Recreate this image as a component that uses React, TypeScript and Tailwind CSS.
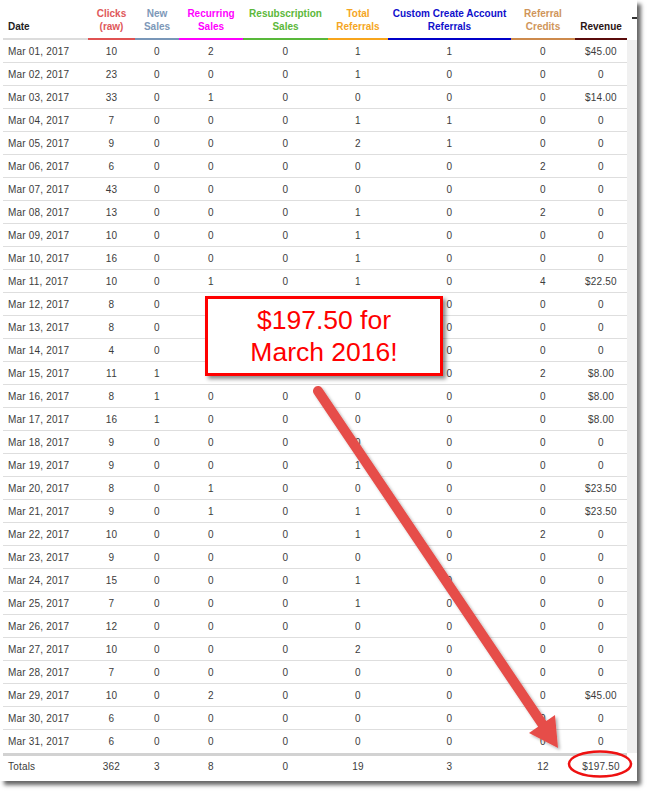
import React from 'react';

type Row = [string, number, number, number | '', number | '', number | '', number, number, string];

const rows: Row[] = [
  ['Mar 01, 2017', 10, 0, 2, 0, 1, 1, 0, '$45.00'],
  ['Mar 02, 2017', 23, 0, 0, 0, 1, 0, 0, '0'],
  ['Mar 03, 2017', 33, 0, 1, 0, 0, 0, 0, '$14.00'],
  ['Mar 04, 2017', 7, 0, 0, 0, 1, 1, 0, '0'],
  ['Mar 05, 2017', 9, 0, 0, 0, 2, 1, 0, '0'],
  ['Mar 06, 2017', 6, 0, 0, 0, 0, 0, 2, '0'],
  ['Mar 07, 2017', 43, 0, 0, 0, 0, 0, 0, '0'],
  ['Mar 08, 2017', 13, 0, 0, 0, 1, 0, 2, '0'],
  ['Mar 09, 2017', 10, 0, 0, 0, 1, 0, 0, '0'],
  ['Mar 10, 2017', 16, 0, 0, 0, 1, 0, 0, '0'],
  ['Mar 11, 2017', 10, 0, 1, 0, 1, 0, 4, '$22.50'],
  // the callout covers these cells in the screenshot
  ['Mar 12, 2017', 8, 0, '', '', '', 0, 0, '0'],
  ['Mar 13, 2017', 8, 0, '', '', '', 0, 0, '0'],
  ['Mar 14, 2017', 4, 0, '', '', '', 0, 0, '0'],
  ['Mar 15, 2017', 11, 1, '', '', '', 0, 2, '$8.00'],
  ['Mar 16, 2017', 8, 1, 0, 0, 0, 0, 0, '$8.00'],
  ['Mar 17, 2017', 16, 1, 0, 0, 0, 0, 0, '$8.00'],
  ['Mar 18, 2017', 9, 0, 0, 0, 0, 0, 0, '0'],
  ['Mar 19, 2017', 9, 0, 0, 0, 1, 0, 0, '0'],
  ['Mar 20, 2017', 8, 0, 1, 0, 0, 0, 0, '$23.50'],
  ['Mar 21, 2017', 9, 0, 1, 0, 1, 0, 0, '$23.50'],
  ['Mar 22, 2017', 10, 0, 0, 0, 1, 0, 2, '0'],
  ['Mar 23, 2017', 9, 0, 0, 0, 0, 0, 0, '0'],
  ['Mar 24, 2017', 15, 0, 0, 0, 1, 0, 0, '0'],
  ['Mar 25, 2017', 7, 0, 0, 0, 1, 0, 0, '0'],
  ['Mar 26, 2017', 12, 0, 0, 0, 0, 0, 0, '0'],
  ['Mar 27, 2017', 10, 0, 0, 0, 2, 0, 0, '0'],
  ['Mar 28, 2017', 7, 0, 0, 0, 0, 0, 0, '0'],
  ['Mar 29, 2017', 10, 0, 2, 0, 0, 0, 0, '$45.00'],
  ['Mar 30, 2017', 6, 0, 0, 0, 0, 0, 0, '0'],
  ['Mar 31, 2017', 6, 0, 0, 0, 0, 0, 0, '0'],
];

const totals = ['Totals', 362, 3, 8, 0, 19, 3, 12, '$197.50'];

// header cells: label lines, text colour, underline colour
const headers = [
  { lines: ['Date'], cls: 'text-[#222] border-[#dcdcdc] text-left pl-[5px]' },
  { lines: ['Clicks', '(raw)'], cls: 'text-[#e0585a] border-[#e05252]' },
  { lines: ['New', 'Sales'], cls: 'text-[#7d98b8] border-[#7896b8]' },
  { lines: ['Recurring', 'Sales'], cls: 'text-[#f0f] border-[#f0f]' },
  { lines: ['Resubscription', 'Sales'], cls: 'text-[#5cb83a] border-[#58b83a]' },
  { lines: ['Total', 'Referrals'], cls: 'text-[#f5a623] border-[#f7a51c]' },
  { lines: ['Custom Create Account', 'Referrals'], cls: 'text-[#1010cc] border-[#0000c8]' },
  { lines: ['Referral', 'Credits'], cls: 'text-[#d0955a] border-[#cd8a4c]' },
  { lines: ['Revenue'], cls: 'text-[#2b1414] border-[#5a0c0c]' },
];

const cols = 'grid grid-cols-[85px_47px_44px_64px_85px_60px_123px_64px_52px]';

const Cells = ({ cells }: { cells: (string | number)[] }) => (
  <>
    {cells.map((c, i) => (
      <div key={i} className={i === 0 ? 'pl-[5px] text-left' : 'text-center'}>
        {c}
      </div>
    ))}
  </>
);

export default function App() {
  return (
    <div
      className="relative w-[652px] h-[798px] overflow-hidden bg-white"
      style={{ fontFamily: '"Liberation Sans", Arial, sans-serif' }}
    >
      {/* captured page with drop shadow */}
      <div className="w-[637px] h-[781px] bg-white shadow-[4px_4px_4px_rgba(0,0,0,0.6)] flex flex-col">
        {/* header */}
        <div className="flex">
          <div className={`${cols} ml-[3px] h-[40px] items-end text-[10px] font-bold leading-[13px]`}>
            {headers.map((h, i) => (
              <div key={i} className={`border-b-2 pb-[5px] text-center whitespace-nowrap ${h.cls}`}>
                {h.lines.map((l, j) => (
                  <div key={j}>{l}</div>
                ))}
              </div>
            ))}
          </div>
          <div className="flex-1 relative">
            <div className="absolute left-[5px] top-[17px] w-[5px] h-[2px] bg-[#333]" />
          </div>
        </div>

        {/* body */}
        <div className="flex">
          <div className="ml-[3px] w-[624px] text-[10px] tracking-[0.2px] text-[#3c3c3c]">
            {rows.map((r, i) => (
              <div
                key={i}
                className={`${cols} h-[23px] items-center ${i < rows.length - 1 ? 'border-b border-[#dedede]' : ''}`}
              >
                <Cells cells={r} />
              </div>
            ))}
          </div>
          <div className="flex-1 bg-[#f0f0f0]" />
        </div>

        {/* totals */}
        <div className={`${cols} ml-[3px] w-[624px] h-[23px] items-center border-t-[3px] border-[#d2d2d2] text-[10px] tracking-[0.2px] text-[#3c3c3c]`}>
          <Cells cells={totals} />
        </div>
      </div>

      {/* callout */}
      <div className="absolute left-[205px] top-[296px] w-[238px] h-[80px] border-[3px] border-[#ff0000] bg-white shadow-[3px_3px_4px_rgba(0,0,0,0.45)] flex flex-col items-center justify-center text-[26.5px] leading-[32px] text-[#ff0000]">
        <div>$197.50 for</div>
        <div>March 2016!</div>
      </div>

      {/* arrow + circle */}
      <svg className="absolute inset-0 pointer-events-none" width="652" height="798" viewBox="0 0 652 798">
        <defs>
          <filter id="sh" x="-10%" y="-10%" width="130%" height="130%">
            <feDropShadow dx="2" dy="2" stdDeviation="1.5" floodColor="#000" floodOpacity="0.3" />
          </filter>
        </defs>
        <g filter="url(#sh)">
          <line x1="318" y1="391" x2="545" y2="728" stroke="#e64d49" strokeWidth="10" strokeLinecap="round" />
          <polygon points="558,748 529,733 555,715" fill="#e64d49" />
        </g>
        <ellipse cx="600" cy="764" rx="31" ry="12.5" fill="none" stroke="#ee1111" strokeWidth="2.5" />
      </svg>
    </div>
  );
}
